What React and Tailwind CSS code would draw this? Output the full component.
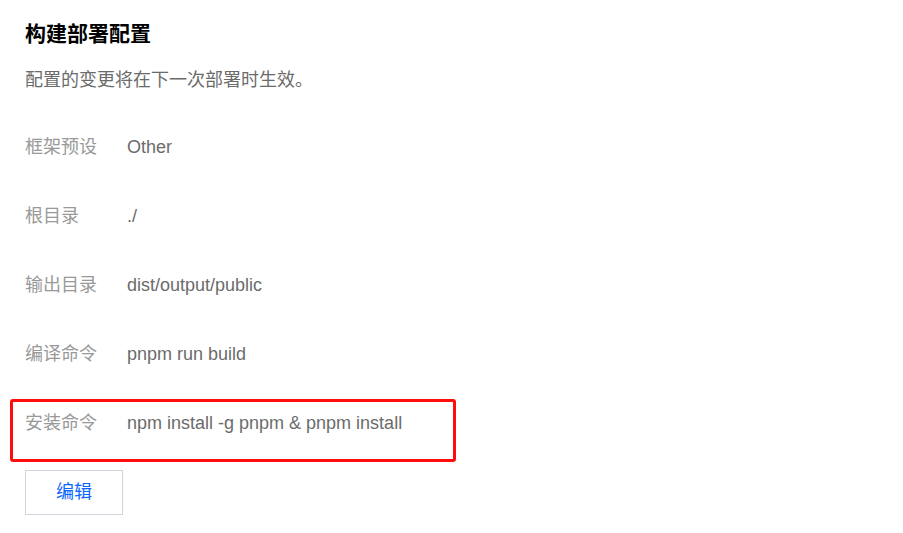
const rows = [
  { label: '框架预设', value: 'Other' },
  { label: '根目录', value: './' },
  { label: '输出目录', value: 'dist/output/public' },
  { label: '编译命令', value: 'pnpm run build' },
];

function Row({ label, value }) {
  return (
    <div className="flex h-[24px] items-center leading-[24px]">
      <span className="w-[102px] shrink-0 text-[#999999]">{label}</span>
      <span className="text-[#6b6b6b]">{value}</span>
    </div>
  );
}

export default function App() {
  return (
    <div
      className="min-h-screen bg-white pl-[25px] pt-[20px] text-[18px]"
      style={{ fontFamily: '"Liberation Sans", "Noto Sans CJK SC", sans-serif' }}
    >
      <h1 className="h-[28px] text-[21px] font-bold leading-[28px] text-black">构建部署配置</h1>
      <p className="mt-[20px] h-[24px] leading-[24px] text-[#6b6b6b]">配置的变更将在下一次部署时生效。</p>

      <div className="mt-[43px] flex flex-col gap-[45px]">
        {rows.map((r) => (
          <Row key={r.label} {...r} />
        ))}
      </div>

      {/* highlighted row */}
      <div className="-ml-[15px] mt-[33px] w-[446px] rounded-[3px] border-[3px] border-[#ff0d0d] pb-[24px] pl-[12px] pt-[9px]">
        <Row label="安装命令" value="npm install -g pnpm & pnpm install" />
      </div>

      <button className="mt-[8px] flex h-[45px] w-[98px] items-center justify-center border border-[#d0d5dd] bg-white text-[18px] text-[#0a66ff]">
        编辑
      </button>
    </div>
  );
}
